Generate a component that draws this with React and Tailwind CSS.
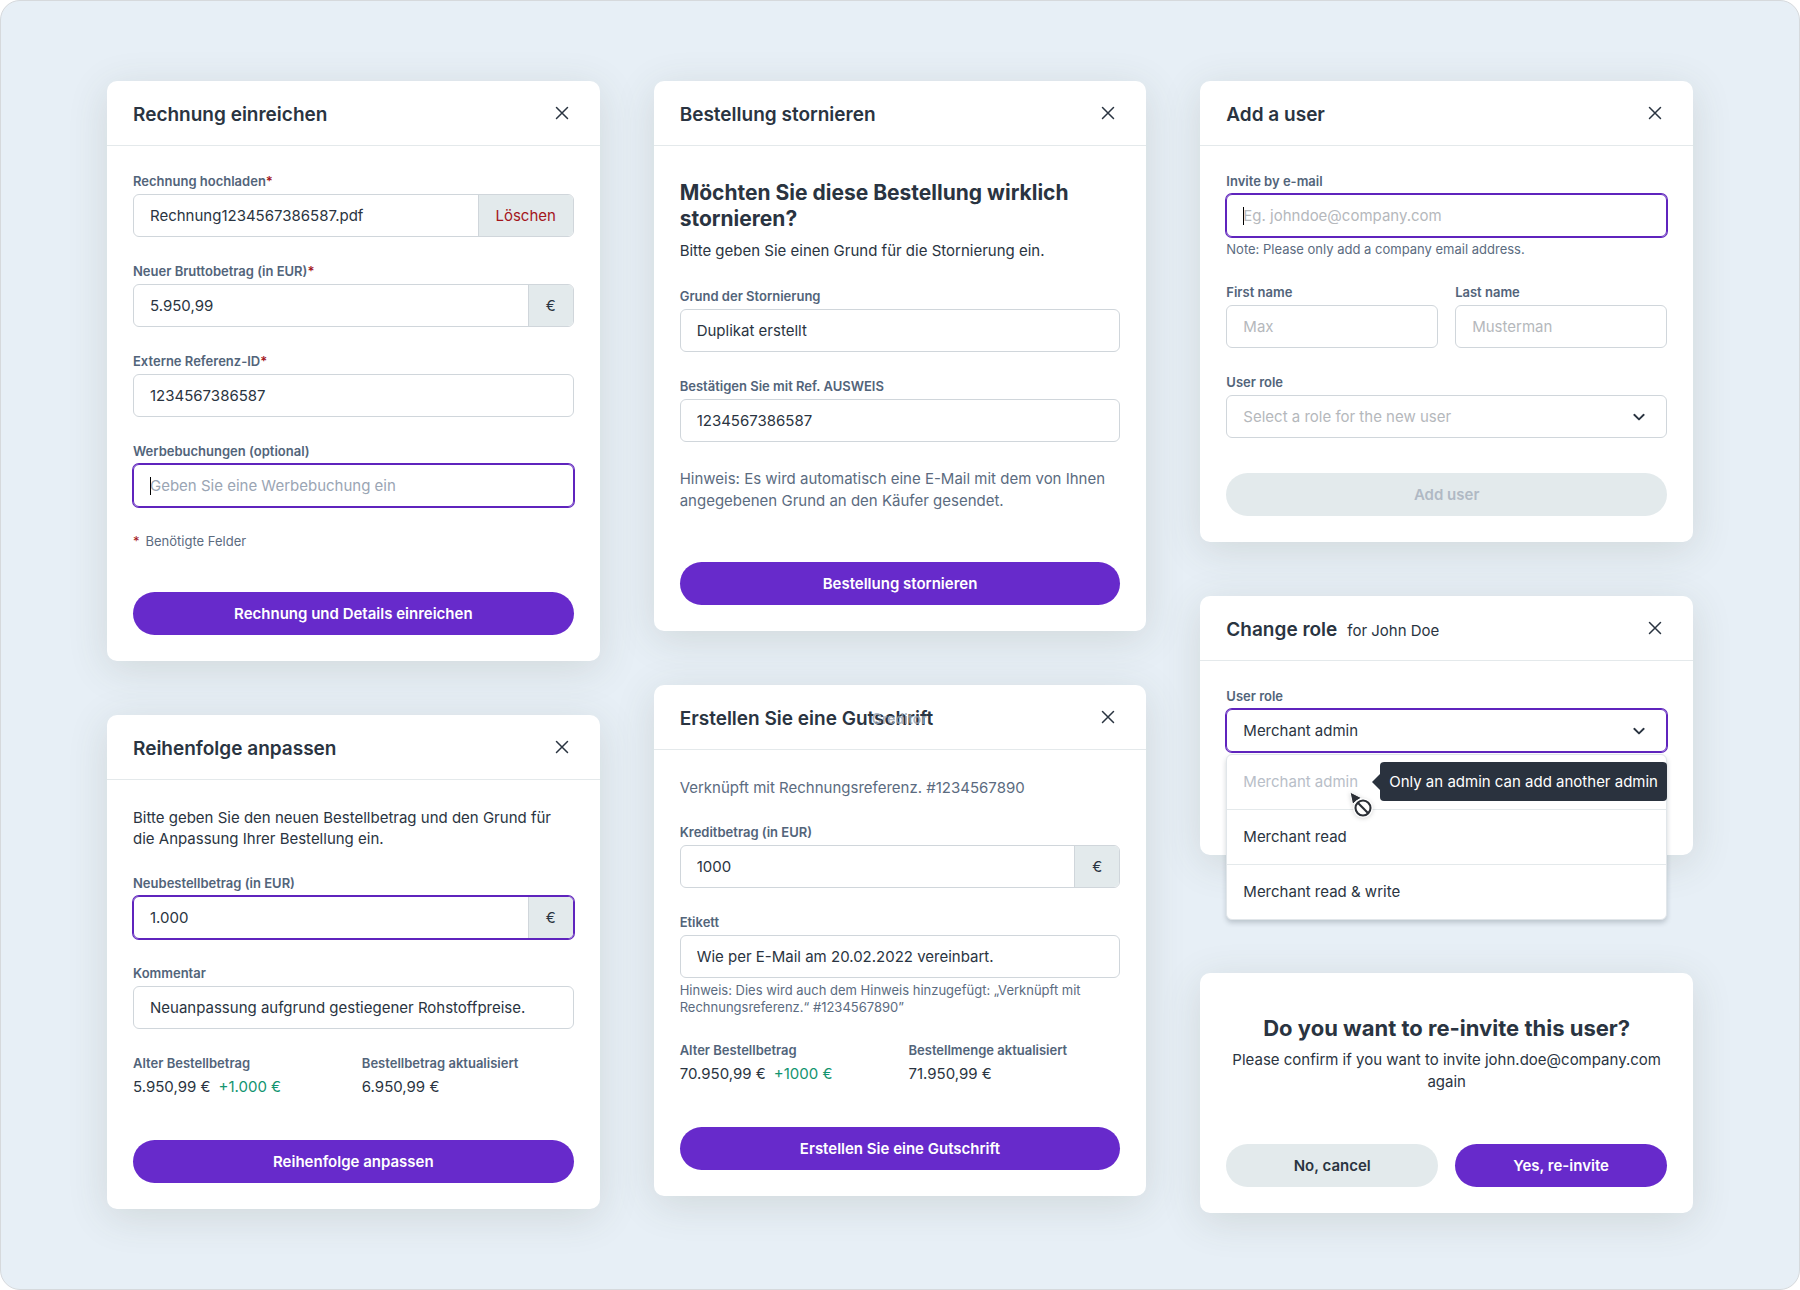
import React, { useState } from 'react';
import clsx from 'clsx';

function CloseIcon() {
  return (
    <svg width="14" height="14" viewBox="0 0 14 14" fill="none" stroke="currentColor" strokeWidth="1.5" strokeLinecap="round">
      <path d="M1.5 1.5l11 11M12.5 1.5l-11 11" />
    </svg>
  );
}

function ChevronIcon() {
  return (
    <svg width="14" height="14" viewBox="0 0 14 14" fill="none" stroke="currentColor" strokeWidth="1.9" strokeLinecap="round" strokeLinejoin="round">
      <path d="M2.3 4.8L7 9.4l4.7-4.6" />
    </svg>
  );
}

function NotAllowedCursor() {
  return (
    <svg width="26" height="30" viewBox="0 0 26 30" className="drop-shadow-sm">
      <path d="M1 1l2.6 12.5L6.6 10.5 12.5 6.8z" fill="#2b2f36" stroke="#fff" strokeWidth="1" />
      <circle cx="14" cy="17" r="9.8" fill="#fff" />
      <circle cx="14" cy="17" r="7.5" fill="#fff" stroke="#2b2f36" strokeWidth="2.1" />
      <path d="M8.8 11.8l10.4 10.4" stroke="#2b2f36" strokeWidth="2.1" />
    </svg>
  );
}

function Card({ title, suffix, overlay, className, children }) {
  return (
    <section className={clsx('rounded-[10px] bg-white shadow-[0_8px_40px_rgba(70,80,60,0.14)]', className)}>
      {title && (
        <header className="flex items-center justify-between border-b border-[#e4e9eb] py-4 pr-[31px] pl-[26px]">
          <h2 className="relative pt-1 text-[19px] leading-7 font-semibold">
            {title}
            {suffix && <span className="ml-2.5 text-[15px] leading-none font-normal">{suffix}</span>}
            {overlay}
          </h2>
          <button type="button" aria-label="Close" className="cursor-pointer">
            <CloseIcon />
          </button>
        </header>
      )}
      {children}
    </section>
  );
}

function Label({ htmlFor, required, children }) {
  return (
    <label htmlFor={htmlFor} className="block text-[13px] leading-4 font-semibold text-[#52647a]">
      {children}
      {required && <span className="text-[#a3161c]">*</span>}
    </label>
  );
}

const frame = 'relative mt-[5px] flex h-[43px] overflow-hidden rounded-md border';
const idle = 'border-[#d0d6db]';
const active = 'border-[#5f24bd] ring-1 ring-[#5f24bd]';

function Field({ id, label, required, focused, value, placeholder, addon, muted, hint }) {
  return (
    <div>
      <Label htmlFor={id} required={required}>{label}</Label>
      <div className={clsx(frame, focused ? active : idle)}>
        <input
          id={id}
          type="text"
          defaultValue={value}
          placeholder={placeholder}
          className={clsx(
            'min-w-0 flex-1 bg-transparent px-4 pt-px text-[15px] outline-none',
            muted ? 'placeholder:text-[#9aa5b4]' : 'placeholder:text-[#b5b8bc]'
          )}
        />
        {focused && placeholder && <span className="absolute top-3 left-4 h-[18px] w-px bg-black"></span>}
        {addon}
      </div>
      {hint && <p className="mt-1 text-[13px] leading-[17px] text-[#5b6b80]">{hint}</p>}
    </div>
  );
}

function Select({ id, label, focused, value, options, empty }) {
  const [selected, setSelected] = useState(value);
  return (
    <div>
      <Label htmlFor={id}>{label}</Label>
      <div className={clsx(frame, focused ? active : idle)}>
        <select
          id={id}
          value={selected}
          onChange={(e) => setSelected(e.target.value)}
          className={clsx('flex-1 appearance-none bg-transparent px-4 pt-px text-[15px] outline-none', !selected && 'text-[#b5b8bc]')}
        >
          {empty && <option value="">{empty}</option>}
          {options.map((option) => (
            <option key={option} value={option}>{option}</option>
          ))}
        </select>
        <span className="pointer-events-none absolute inset-y-0 right-5 flex items-center">
          <ChevronIcon />
        </span>
      </div>
    </div>
  );
}

function Euro() {
  return <span className="flex w-[45px] items-center justify-center border-l border-[#d0d6db] bg-[#e3eaec] pt-px text-[15px]">€</span>;
}

function Button({ variant = 'primary', disabled, className, children }) {
  return (
    <button
      type="button"
      disabled={disabled}
      className={clsx(
        'h-[43px] w-full rounded-full pt-px text-[15px] font-semibold',
        variant === 'primary' && 'bg-[#672acb] text-white',
        variant === 'secondary' && 'bg-[#e3eaec]',
        variant === 'disabled' && 'bg-[#e3eaec] text-[#b0b9c4]',
        className
      )}
    >
      {children}
    </button>
  );
}

function Amounts({ items }) {
  return (
    <dl className="grid grid-cols-2 gap-[17px]">
      {items.map((item) => (
        <div key={item.label}>
          <dt className="text-[13px] leading-4 font-semibold text-[#52647a]">{item.label}</dt>
          <dd className="mt-[5px] text-[15px] leading-[21px]">
            {item.value}
            {item.diff && <span className="ml-2 text-[#12946f]">{item.diff}</span>}
          </dd>
        </div>
      ))}
    </dl>
  );
}

const body = 'flex flex-col gap-[26px] px-[26px] pt-[27px] pb-[26px]';
const roles = ['Merchant admin', 'Merchant read', 'Merchant read & write'];

export default function App() {
  return (
    <div className="min-h-screen bg-white font-['Inter',sans-serif] text-[#2a3441]">
      <main className="grid min-h-screen grid-cols-3 items-start gap-[54px] rounded-[20px] border border-[#d6d9dc] bg-[#e7eff6] px-[106px] pt-20 pb-16">
        <div className="flex flex-col gap-[54px]">
          <Card title="Rechnung einreichen">
            <form className={body}>
              <Field
                id="invoice-file"
                label="Rechnung hochladen"
                required
                value="Rechnung1234567386587.pdf"
                addon={
                  <button type="button" className="w-[95px] border-l border-[#d0d6db] bg-[#e3eaec] pt-px text-[15px] text-[#a3161c]">
                    Löschen
                  </button>
                }
              />
              <Field id="gross-amount" label="Neuer Bruttobetrag (in EUR)" required value="5.950,99" addon={<Euro />} />
              <Field id="external-ref" label="Externe Referenz-ID" required value="1234567386587" />
              <Field id="bookings" label="Werbebuchungen (optional)" focused muted placeholder="Geben Sie eine Werbebuchung ein" />
              <p className="text-[13px] leading-4 text-[#5b6b80]">
                <span className="mr-1.5 text-[#a3161c]">*</span>Benötigte Felder
              </p>
              <Button className="mt-[17px]">Rechnung und Details einreichen</Button>
            </form>
          </Card>

          <Card title="Reihenfolge anpassen">
            <form className={body}>
              <p className="text-[15px] leading-[21px]">
                Bitte geben Sie den neuen Bestellbetrag und den Grund für die Anpassung Ihrer Bestellung ein.
              </p>
              <Field id="new-amount" label="Neubestellbetrag (in EUR)" focused value="1.000" addon={<Euro />} />
              <Field id="comment" label="Kommentar" value="Neuanpassung aufgrund gestiegener Rohstoffpreise." />
              <Amounts
                items={[
                  { label: 'Alter Bestellbetrag', value: '5.950,99 €', diff: '+1.000 €' },
                  { label: 'Bestellbetrag aktualisiert', value: '6.950,99 €' },
                ]}
              />
              <Button className="mt-[17px]">Reihenfolge anpassen</Button>
            </form>
          </Card>
        </div>

        <div className="flex flex-col gap-[54px]">
          <Card title="Bestellung stornieren">
            <form className={body}>
              <div className="pt-[7px]">
                <h3 className="text-[21px] leading-[26px] font-bold">Möchten Sie diese Bestellung wirklich stornieren?</h3>
                <p className="mt-2 text-[15px] leading-[22px]">Bitte geben Sie einen Grund für die Stornierung ein.</p>
              </div>
              <Field id="cancel-reason" label="Grund der Stornierung" value="Duplikat erstellt" />
              <Field id="cancel-ref" label="Bestätigen Sie mit Ref. AUSWEIS" value="1234567386587" />
              <p className="text-[15px] leading-[22px] text-[#5b6b80]">
                Hinweis: Es wird automatisch eine E-Mail mit dem von Ihnen angegebenen Grund an den Käufer gesendet.
              </p>
              <Button className="mt-6">Bestellung stornieren</Button>
            </form>
          </Card>

          <Card
            title="Erstellen Sie eine Gutschrift"
            overlay={<span className="absolute top-1 left-48 text-[14px] font-semibold text-[#9aa5b4] opacity-80">Creditor</span>}
          >
            <form className={body}>
              <p className="text-[15px] leading-[21px] text-[#5b6b80]">Verknüpft mit Rechnungsreferenz. #1234567890</p>
              <Field id="credit-amount" label="Kreditbetrag (in EUR)" value="1000" addon={<Euro />} />
              <Field
                id="credit-label"
                label="Etikett"
                value="Wie per E-Mail am 20.02.2022 vereinbart."
                hint="Hinweis: Dies wird auch dem Hinweis hinzugefügt: „Verknüpft mit Rechnungsreferenz.“ #1234567890”"
              />
              <Amounts
                items={[
                  { label: 'Alter Bestellbetrag', value: '70.950,99 €', diff: '+1000 €' },
                  { label: 'Bestellmenge aktualisiert', value: '71.950,99 €' },
                ]}
              />
              <Button className="mt-[17px]">Erstellen Sie eine Gutschrift</Button>
            </form>
          </Card>
        </div>

        <div className="flex flex-col gap-[54px]">
          <Card title="Add a user">
            <form className={body}>
              <Field
                id="invite-email"
                label="Invite by e-mail"
                focused
                placeholder="Eg. johndoe@company.com"
                hint="Note: Please only add a company email address."
              />
              <div className="grid grid-cols-2 gap-[17px]">
                <Field id="first-name" label="First name" placeholder="Max" />
                <Field id="last-name" label="Last name" placeholder="Musterman" />
              </div>
              <Select id="new-role" label="User role" value="" empty="Select a role for the new user" options={roles} />
              <Button variant="disabled" disabled className="mt-[9px]">Add user</Button>
            </form>
          </Card>

          <Card title="Change role" suffix="for John Doe" className="mb-16">
            <div className="px-[26px] pt-[27px] pb-[103px]">
              <div className="relative">
                <Select id="change-role" label="User role" focused value="Merchant admin" options={roles} />
                <ul className="absolute inset-x-0 top-full mt-0.5 divide-y divide-[#e4e9eb] rounded-md border border-[#e1e6ea] bg-white shadow-[0_3px_5px_rgba(40,55,70,0.22)]">
                  {roles.map((role, i) => (
                    <li key={role} className="relative">
                      <button
                        type="button"
                        disabled={i === 0}
                        className="block h-[54px] w-full px-4 text-left text-[15px] disabled:text-[#b8bec8]"
                      >
                        {role}
                      </button>
                      {i === 0 && (
                        <>
                          <div role="tooltip" className="absolute top-[7px] -right-px rounded bg-[#2a323e] px-[9px] py-[9px] text-[15px] leading-[21px] whitespace-nowrap text-white">
                            <span className="absolute top-1/2 right-full -mt-2 border-y-8 border-r-8 border-y-transparent border-r-[#2a323e]"></span>
                            Only an admin can add another admin
                          </div>
                          <span className="absolute top-9 left-[122px] z-10">
                            <NotAllowedCursor />
                          </span>
                        </>
                      )}
                    </li>
                  ))}
                </ul>
              </div>
            </div>
          </Card>

          <Card className="px-[26px] pt-[42px] pb-[26px] text-center">
            <h3 className="text-[22px] leading-[26px] font-bold">Do you want to re-invite this user?</h3>
            <p className="mt-2 text-[15px] leading-[22px]">Please confirm if you want to invite john.doe@company.com again</p>
            <div className="mt-[51px] grid grid-cols-2 gap-[17px]">
              <Button variant="secondary">No, cancel</Button>
              <Button>Yes, re-invite</Button>
            </div>
          </Card>
        </div>
      </main>
    </div>
  );
}
